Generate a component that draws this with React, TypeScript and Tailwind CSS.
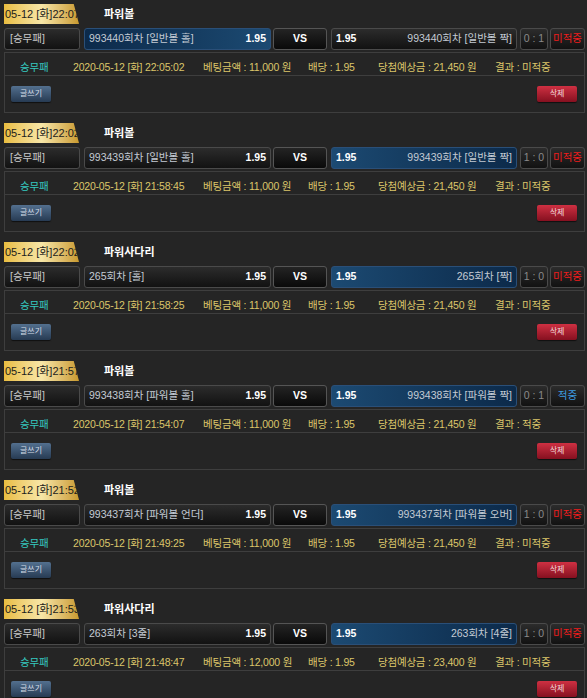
import React from 'react';

type Bet = {
  tab: string;
  game: string;
  round: string;
  leftPick: string;
  rightPick: string;
  selected: 'left' | 'right';
  score: string;
  hit: boolean;
  time: string;
  amount: string;
  win: string;
};

const bets: Bet[] = [
  { tab: '05-12 [화]22:07', game: '파워볼', round: '993440회차', leftPick: '[일반볼 홀]', rightPick: '[일반볼 짝]', selected: 'left', score: '0 : 1', hit: false, time: '22:05:02', amount: '11,000', win: '21,450' },
  { tab: '05-12 [화]22:02', game: '파워볼', round: '993439회차', leftPick: '[일반볼 홀]', rightPick: '[일반볼 짝]', selected: 'right', score: '1 : 0', hit: false, time: '21:58:45', amount: '11,000', win: '21,450' },
  { tab: '05-12 [화]22:02', game: '파워사다리', round: '265회차', leftPick: '[홀]', rightPick: '[짝]', selected: 'right', score: '1 : 0', hit: false, time: '21:58:25', amount: '11,000', win: '21,450' },
  { tab: '05-12 [화]21:57', game: '파워볼', round: '993438회차', leftPick: '[파워볼 홀]', rightPick: '[파워볼 짝]', selected: 'right', score: '0 : 1', hit: true, time: '21:54:07', amount: '11,000', win: '21,450' },
  { tab: '05-12 [화]21:52', game: '파워볼', round: '993437회차', leftPick: '[파워볼 언더]', rightPick: '[파워볼 오버]', selected: 'right', score: '1 : 0', hit: false, time: '21:49:25', amount: '11,000', win: '21,450' },
  { tab: '05-12 [화]21:53', game: '파워사다리', round: '263회차', leftPick: '[3줄]', rightPick: '[4줄]', selected: 'right', score: '1 : 0', hit: false, time: '21:48:47', amount: '12,000', win: '23,400' },
];

const darkBox = 'h-[22px] rounded-[3px] border border-[#4a4a4a] bg-gradient-to-b from-[#2c2c2c] to-[#121212] flex items-center';
const blueLeft = 'h-[22px] rounded-[3px] border border-[#2a4f78] bg-gradient-to-r from-[#0c2a4a] to-[#1c4a72] flex items-center';
const blueRight = 'h-[22px] rounded-[3px] border border-[#2a4f78] bg-gradient-to-l from-[#0c2a4a] to-[#1c4a72] flex items-center';

function BetBlock({ b }: { b: Bet }) {
  return (
    <div className="pt-[4px] mb-[6px]">
      {/* 날짜 탭 + 게임명 */}
      <div className="flex items-center h-[20px] ml-[4px]">
        <div className="w-[75px] h-[20px] overflow-hidden whitespace-nowrap bg-gradient-to-r from-[#e9bd3f] via-[#f7e6a6] to-[#c99a2c] [clip-path:polygon(0_0,93%_0,100%_100%,0_100%)] text-[11px] leading-[20px] text-[#1c1c1c] pl-[1px]">
          {b.tab}
        </div>
        <div className="ml-[25px] text-[11px] font-bold text-white">{b.game}</div>
      </div>

      {/* 픽 라인 */}
      <div className="flex mt-[4px] ml-[4px] w-[581px] text-[10.5px]">
        <div className={`${darkBox} w-[76px] px-[5px] text-[#c9c9c9]`}>[승무패]</div>
        <div className={`${b.selected === 'left' ? blueLeft : darkBox} w-[187px] ml-[4px] px-[4px] justify-between`}>
          <span className="text-[#c4cbd4]">{b.round} {b.leftPick}</span>
          <span className="font-bold text-white">1.95</span>
        </div>
        <div className="h-[22px] w-[54px] ml-[2px] rounded-[3px] border border-[#555] bg-gradient-to-b from-[#242424] to-[#0a0a0a] flex items-center justify-center font-bold text-white">
          VS
        </div>
        <div className={`${b.selected === 'right' ? blueRight : darkBox} w-[186px] ml-[4px] px-[4px] justify-between`}>
          <span className="font-bold text-white">1.95</span>
          <span className="text-[#c4cbd4]">{b.round} {b.rightPick}</span>
        </div>
        <div className={`${darkBox} w-[28px] ml-[3px] justify-center text-[#8a8a8a]`}>{b.score}</div>
        <div className={`${darkBox} w-[35px] ml-[2px] justify-center ${b.hit ? 'text-[#3d9be0]' : 'text-[#ee1c1c]'}`}>
          {b.hit ? '적중' : '미적중'}
        </div>
      </div>

      {/* 상세 박스 */}
      <div className="mt-[2px] ml-[4px] w-[581px] border border-[#3e3e3e]">
        <div className="flex items-end pb-[2px] h-[23px] border-b border-[#3e3e3e] text-[10.5px] leading-[12px] tracking-[-0.2px] text-[#dcc56a] whitespace-nowrap">
          <span className="w-[68px] pl-[15px] text-[#35c9c0]">승무패</span>
          <span className="w-[130px]">2020-05-12 [화] {b.time}</span>
          <span className="w-[105px]">베팅금액 : {b.amount} 원</span>
          <span className="w-[70px]">배당 : 1.95</span>
          <span className="w-[117px]">당첨예상금 : {b.win} 원</span>
          <span>결과 : {b.hit ? '적중' : '미적중'}</span>
        </div>
        <div className="flex justify-between pl-[6px] pr-[7px] pt-[10px] pb-[10px]">
          <button className="w-[40px] h-[16px] rounded-[2px] bg-gradient-to-b from-[#53708f] to-[#273b53] text-[8px] text-[#d5dde8] shadow-[0_1px_1px_rgba(0,0,0,0.6)]">
            글쓰기
          </button>
          <button className="w-[40px] h-[16px] rounded-[2px] bg-gradient-to-b from-[#cf3042] to-[#861020] text-[8px] text-[#f3dada] shadow-[0_1px_1px_rgba(0,0,0,0.6)]">
            삭제
          </button>
        </div>
      </div>
    </div>
  );
}

export default function App() {
  return (
    <div className="min-h-screen w-full bg-[#252525] overflow-hidden font-['Liberation_Sans','Noto_Sans_CJK_KR',sans-serif]">
      {bets.map((b, i) => (
        <BetBlock key={i} b={b} />
      ))}
    </div>
  );
}
